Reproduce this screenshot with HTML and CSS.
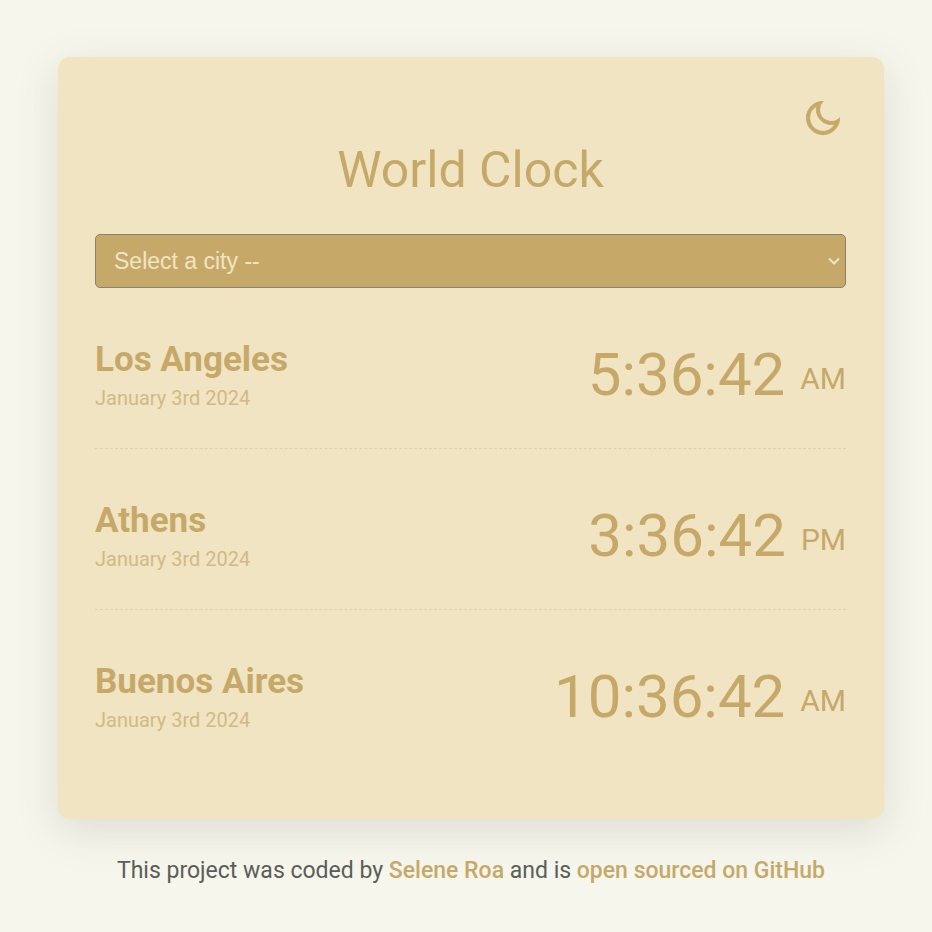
FILE: index.html
```html
<!DOCTYPE html>
<html lang="en">
<head>
<meta charset="utf-8">
<meta name="viewport" content="width=device-width, initial-scale=1">
<title>World Clock</title>
<link rel="stylesheet" href="styles.css">
</head>
<body>
<div class="container">
  <main class="card">
    <button class="theme-toggle" type="button" aria-label="Toggle dark mode">
      <svg viewBox="0 0 24 24" width="40" height="40" fill="currentColor" stroke="currentColor" stroke-width="0.500" aria-hidden="true"><path d="M10 7a7 7 0 0 0 12 4.900v.1c0 5.523-4.477 10-10 10S2 17.523 2 12 6.477 2 12 2h.1A6.979 6.979 0 0 0 10 7zm-6 5a8 8 0 0 0 15.062 3.762A9 9 0 0 1 8.238 4.938 7.999 7.999 0 0 0 4 12z"/></svg>
    </button>
    <h1 class="title">World Clock</h1>
    <div class="picker">
      <select class="city-select" aria-label="Select a city">
        <option>Select a city --</option>
        <option>Los Angeles</option>
        <option>Athens</option>
        <option>Buenos Aires</option>
      </select>
      <svg class="chevron" viewBox="0 0 12 12" width="12" height="12" fill="none" stroke="currentColor" stroke-width="2" aria-hidden="true"><path d="M1 3.500L6 8.500L11 3.500"/></svg>
    </div>
    <section class="city">
      <div><h2 class="name">Los Angeles</h2><div class="date">January 3rd 2024</div></div>
      <div class="time">5:36:42 <small class="period">AM</small></div>
    </section>
    <section class="city">
      <div><h2 class="name">Athens</h2><div class="date">January 3rd 2024</div></div>
      <div class="time">3:36:42 <small class="period">PM</small></div>
    </section>
    <section class="city">
      <div><h2 class="name">Buenos Aires</h2><div class="date">January 3rd 2024</div></div>
      <div class="time">10:36:42 <small class="period">AM</small></div>
    </section>
  </main>
  <footer class="footer">This project was coded by <a href="#">Selene Roa</a> and is <a href="#">open sourced on GitHub</a></footer>
</div>
</body>
</html>
```
FILE: styles.css
```css
* { box-sizing: border-box; }
body {
  margin: 0;
  background: #f6f6ec;
  color: #c6a969;
  font-family: Roboto, "Liberation Sans", sans-serif;
}
.container {
  margin: 57px 48px 0 58px;
}
.card {
  display: flex;
  flex-direction: column;
  padding: 41px 38px 49px 37px;
  border-radius: 12px;
  background: #f1e4c3;
  box-shadow: 0 11px 40px rgba(89, 94, 89, 0.17);
}
.theme-toggle {
  align-self: flex-end;
  display: block;
  padding: 0 3px 0 0;
  border: 0;
  background: none;
  color: inherit;
  cursor: pointer;
}
.theme-toggle svg { display: block; }
.title {
  margin: 0 0 31px;
  font-size: 50px;
  line-height: 65px;
  font-weight: 400;
  text-align: center;
}
.picker { position: relative; }
.city-select {
  display: block;
  width: 100%;
  height: 54px;
  padding: 0 18px;
  border: 1px solid #89836e;
  border-radius: 5px;
  appearance: none;
  background: #c6a969;
  color: #f1e4c3;
  font: 23px "Liberation Sans", sans-serif;
}
.chevron {
  position: absolute;
  top: 21px;
  right: 6px;
  color: #f1e4c3;
  pointer-events: none;
}
.city {
  display: flex;
  justify-content: space-between;
  align-items: center;
  padding: 52px 0 38px;
}
.city:not(:last-child) { border-bottom: 1px dashed #e2d1a6; }
.name {
  margin: 0 0 7px;
  font-size: 35px;
  line-height: 40px;
  font-weight: 700;
}
.date {
  font-size: 20px;
  line-height: 23px;
  opacity: 0.7;
}
.time {
  font-size: 60px;
  line-height: 60px;
}
.period {
  font-size: 30px;
  line-height: 30px;
  vertical-align: 6px;
}
.footer {
  margin-top: 38px;
  color: #5a5e59;
  font-size: 23px;
  line-height: 28px;
  text-align: center;
}
.footer a {
  color: #c6a969;
  font-weight: 500;
  text-decoration: none;
}
```
